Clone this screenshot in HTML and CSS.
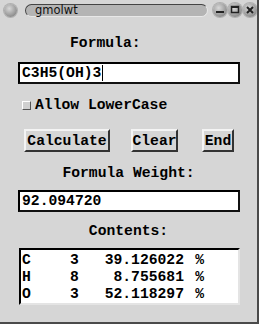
FILE: index.html
```html
<!DOCTYPE html>
<html>
<head>
<meta charset="utf-8">
<link rel="stylesheet" href="styles.css">
</head>
<body>
<div class="win">
  <div class="titlebar">
    <span class="tb-circle"></span>
    <div class="tb-pill"><span class="tb-title">gmolwt</span></div>
    <div class="tb-btns">
      <span class="tb-circle small"><svg width="14" height="14" viewBox="0 0 14 14"><rect x="3" y="8" width="8" height="2" fill="#222"/></svg></span>
      <span class="tb-circle small"><svg width="14" height="14" viewBox="0 0 14 14"><rect x="3.5" y="3.5" width="7" height="6" fill="none" stroke="#222" stroke-width="1.5"/><rect x="3" y="3" width="8" height="2" fill="#222"/></svg></span>
      <span class="tb-circle small"><svg width="14" height="14" viewBox="0 0 14 14"><path d="M4 4 L10 10 M10 4 L4 10" stroke="#222" stroke-width="2"/></svg></span>
    </div>
  </div>
  <div class="content">
    <div class="label label-formula">Formula:</div>
    <div class="entry entry-formula">C3H5(OH)3<span class="cursor"></span></div>
    <div class="check"><span class="box"></span><span>Allow LowerCase</span></div>
    <div class="buttons">
      <span class="btn btn-calc">Calculate</span>
      <span class="btn btn-clear">Clear</span>
      <span class="btn btn-end">End</span>
    </div>
    <div class="label label-weight">Formula Weight:</div>
    <div class="entry entry-weight">92.094720</div>
    <div class="label label-contents">Contents:</div>
    <div class="list">
      <div class="row"><span class="el">C</span><span class="n">3</span><span class="pc">39.126022</span><span class="ps">%</span></div>
      <div class="row"><span class="el">H</span><span class="n">8</span><span class="pc">8.755681</span><span class="ps">%</span></div>
      <div class="row"><span class="el">O</span><span class="n">3</span><span class="pc">52.118297</span><span class="ps">%</span></div>
    </div>
  </div>
</div>
</body>
</html>
```
FILE: styles.css
```css
html, body {
  margin: 0;
  padding: 0;
  background: #d6d6d6;
}
.win {
  width: 257px;
  height: 322px;
  background: #d6d6d6;
  border-right: 2px solid #4a4a4a;
  border-bottom: 2px solid #4a4a4a;
  font-family: "Courier New", "Courier", "Nimbus Mono PS", "Nimbus Mono L", "FreeMono", "Liberation Mono", monospace;
  font-weight: bold;
  font-size: 14.7px;
  color: #000;
  overflow: hidden;
}
.titlebar {
  height: 20px;
  display: flex;
  align-items: center;
  padding-left: 4px;
  box-sizing: border-box;
}
.tb-circle {
  width: 13px;
  height: 13px;
  border-radius: 50%;
  background: radial-gradient(circle at 40% 35%, #d8d8d8 0%, #9a9a9a 60%, #6e6e6e 100%);
  box-shadow: 0 0 0 1px #b0b0b0;
  display: inline-flex;
  align-items: center;
  justify-content: center;
  flex: none;
}
.tb-circle svg { display: block; }
.tb-pill {
  margin-left: 8px;
  width: 183px;
  height: 13px;
  border-radius: 7px;
  background: #b4b4b4;
  border-top: 1px solid #444;
  border-left: 1px solid #444;
  border-bottom: 1px solid #e8e8e8;
  border-right: 1px solid #e8e8e8;
  display: flex;
  align-items: center;
  padding-left: 9px;
  box-sizing: border-box;
}
.tb-title {
  font-family: "DejaVu Sans", sans-serif;
  font-weight: normal;
  font-size: 11.5px;
  color: #111;
}
.tb-btns {
  display: flex;
  margin-left: 5px;
  gap: 1px;
}
.tb-circle.small {
  width: 14px;
  height: 14px;
}
.content {
  display: flex;
  flex-direction: column;
}
.label {
  height: 18px;
  line-height: 18px;
  text-align: center;
}
.label-formula {
  margin-top: 14px;
  text-align: left;
  padding-left: 70px;
}
.label-weight { margin-top: 12px; }
.label-contents { margin-top: 10px; }
.entry {
  margin-left: 18px;
  width: 222px;
  height: 22px;
  box-sizing: border-box;
  background: #fff;
  border: 2px solid #000;
  border-right-color: #111;
  border-bottom-color: #111;
  line-height: 18px;
  padding-left: 2px;
  display: flex;
  align-items: center;
}
.entry-formula { margin-top: 10px; }
.entry-weight { margin-top: 8px; }
.cursor {
  display: inline-block;
  width: 1px;
  height: 16px;
  background: #000;
  margin-left: 1px;
}
.check {
  margin-top: 12px;
  height: 18px;
  display: flex;
  align-items: center;
  padding-left: 22px;
}
.box {
  width: 7px;
  height: 7px;
  background: #d0d0d0;
  border-top: 1px solid #fff;
  border-left: 1px solid #fff;
  border-right: 1px solid #555;
  border-bottom: 1px solid #555;
  margin-right: 4px;
}
.buttons {
  margin-top: 15px;
  display: flex;
  padding-left: 24px;
  height: 23px;
}
.btn {
  height: 23px;
  box-sizing: border-box;
  border-top: 2px solid #f4f4f4;
  border-left: 2px solid #f4f4f4;
  border-right: 2px solid #333;
  border-bottom: 2px solid #333;
  display: flex;
  align-items: center;
  justify-content: center;
  background: #d6d6d6;
}
.btn-calc { width: 86px; }
.btn-clear { width: 47px; margin-left: 21px; }
.btn-end { width: 32px; margin-left: 24px; }
.list {
  margin-top: 8px;
  margin-left: 19px;
  width: 221px;
  height: 57px;
  box-sizing: border-box;
  background: #fff;
  border-top: 2px solid #000;
  border-left: 2px solid #000;
  border-right: 2px solid #e4e4e4;
  border-bottom: 2px solid #e4e4e4;
  padding-top: 2px;
}
.row {
  display: grid;
  grid-template-columns: 48px 12px 102px 20px;
  height: 17px;
  line-height: 17px;
  padding-left: 1px;
}
.n { text-align: left; }
.pc { text-align: right; }
.ps { text-align: right; }
```
